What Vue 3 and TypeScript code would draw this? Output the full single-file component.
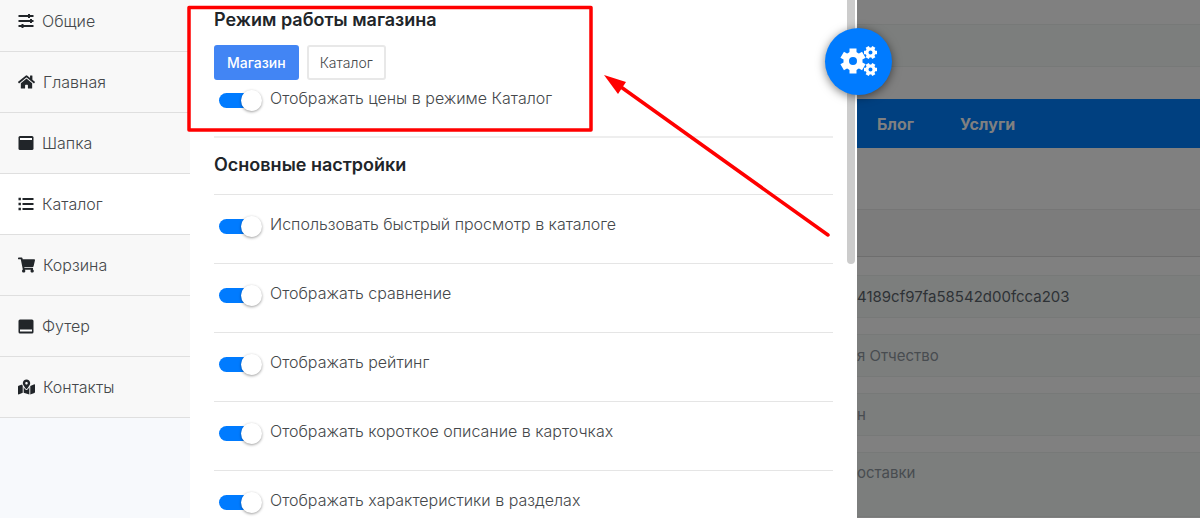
<script setup lang="ts">
import { ref } from 'vue'

interface MenuItem {
  label: string
  icon: 'sliders' | 'home' | 'header' | 'list' | 'cart' | 'footer' | 'map'
}

interface Option {
  id: string
  label: string
  on: boolean
}

const menu: MenuItem[] = [
  { label: 'Общие', icon: 'sliders' },
  { label: 'Главная', icon: 'home' },
  { label: 'Шапка', icon: 'header' },
  { label: 'Каталог', icon: 'list' },
  { label: 'Корзина', icon: 'cart' },
  { label: 'Футер', icon: 'footer' },
  { label: 'Контакты', icon: 'map' },
]
const active = ref('Каталог')
const mode = ref('Магазин')
const showPrices = ref(true)

const options = ref<Option[]>([
  { id: 'quick', label: 'Использовать быстрый просмотр в каталоге', on: true },
  { id: 'compare', label: 'Отображать сравнение', on: true },
  { id: 'rating', label: 'Отображать рейтинг', on: true },
  { id: 'short', label: 'Отображать короткое описание в карточках', on: true },
  { id: 'specs', label: 'Отображать характеристики в разделах', on: true },
])

const token = ref('4189cf97fa58542d00fcca203')
const person = ref('я Отчество')
const phone = ref('н')
const delivery = ref('оставки')
const search = ref('')
</script>

<template>
  <div class="screen">
    <aside class="drawer">
      <nav class="menu">
        <a
          v-for="item in menu"
          :key="item.label"
          href="#"
          class="menu-item"
          :class="{ active: active === item.label }"
          @click.prevent="active = item.label"
        >
          <svg v-if="item.icon === 'sliders'" class="icon" viewBox="0 0 16 16">
            <path d="M0.500 3h15M0.500 8h15M0.500 13h15" stroke="currentColor" stroke-width="1.800" />
            <path d="M11 1v4M13 6v4M4.500 11v4" stroke="currentColor" stroke-width="2" />
          </svg>
          <svg v-else-if="item.icon === 'home'" class="icon icon-wide" viewBox="0 0 576 512">
            <path fill="currentColor" d="M280.37 148.26L96 300.11V464a16 16 0 0 0 16 16l112.06-.29a16 16 0 0 0 15.92-16V368a16 16 0 0 1 16-16h64a16 16 0 0 1 16 16v95.64a16 16 0 0 0 16 16.05L464 480a16 16 0 0 0 16-16V300L295.67 148.26a12.19 12.19 0 0 0-15.3 0zM571.6 251.47L488 182.56V44.05a12 12 0 0 0-12-12h-56a12 12 0 0 0-12 12v72.61L318.47 43a48 48 0 0 0-61 0L4.34 251.47a12 12 0 0 0-1.6 16.9l25.5 31A12 12 0 0 0 45.15 301l235.22-193.74a12.19 12.19 0 0 1 15.3 0L530.9 301a12 12 0 0 0 16.9-1.6l25.5-31a12 12 0 0 0-1.7-16.93z" />
          </svg>
          <svg v-else-if="item.icon === 'header'" class="icon" viewBox="0 0 16 16">
            <rect x="0.500" y="1" width="15" height="14" rx="1.500" fill="currentColor" />
            <path d="M2 4h12" stroke="#fff" stroke-width="2" />
          </svg>
          <svg v-else-if="item.icon === 'list'" class="icon" viewBox="0 0 16 16">
            <path d="M0.500 3h2.400M0.500 8h2.400M0.500 13h2.400" stroke="currentColor" stroke-width="2.400" />
            <path d="M4.500 3h11M4.500 8h11M4.500 13h11" stroke="currentColor" stroke-width="1.800" />
          </svg>
          <svg v-else-if="item.icon === 'cart'" class="icon icon-wide" viewBox="0 0 576 512">
            <path fill="currentColor" d="M528.12 301.319l47.273-208C578.806 78.301 567.391 64 551.99 64H159.208l-9.166-44.81C147.758 8.021 137.93 0 126.529 0H24C10.745 0 0 10.745 0 24v16c0 13.255 10.745 24 24 24h69.883l70.248 343.435C147.325 417.1 136 435.222 136 456c0 30.928 25.072 56 56 56s56-25.072 56-56c0-15.674-6.447-29.835-16.824-40h209.647C430.447 426.165 424 440.326 424 456c0 30.928 25.072 56 56 56s56-25.072 56-56c0-22.172-12.888-41.332-31.579-50.405l5.517-24.276c3.413-15.018-8.002-29.319-23.403-29.319H218.117l-6.545-32h293.145c11.206 0 20.92-7.754 23.403-18.681z" />
          </svg>
          <svg v-else-if="item.icon === 'footer'" class="icon" viewBox="0 0 16 16">
            <rect x="0.500" y="1.500" width="15" height="14" rx="1.500" fill="currentColor" />
            <path d="M2 12.500h12" stroke="#fff" stroke-width="2" />
          </svg>
          <svg v-else class="icon icon-wide" viewBox="0 0 576 512">
            <path fill="currentColor" d="M288 0c-69.59 0-126 56.41-126 126 0 56.26 82.35 158.8 113.9 196.02 6.39 7.54 17.82 7.54 24.2 0C331.65 284.8 414 182.26 414 126 414 56.41 357.59 0 288 0zm0 168c-23.2 0-42-18.8-42-42s18.8-42 42-42 42 18.8 42 42-18.8 42-42 42zM20.12 215.95A32.006 32.006 0 0 0 0 245.66v250.32c0 11.32 11.43 19.06 21.94 14.86L160 448V214.92c-8.84-15.98-16.07-31.54-21.25-46.42L20.12 215.95zM288 359.67c-14.07 0-27.38-6.18-36.51-16.96-19.66-23.2-40.57-49.62-59.49-76.72v182l192 64V266c-18.92 27.09-39.82 53.52-59.49 76.72-9.13 10.77-22.44 16.95-36.51 16.95zm266.06-198.51L416 224v288l139.88-55.95A31.996 31.996 0 0 0 576 426.34V176.02c0-11.32-11.43-19.06-21.94-14.86z" />
          </svg>
          <span>{{ item.label }}</span>
        </a>
      </nav>

      <main class="settings">
        <section class="mode">
          <h2>Режим работы магазина</h2>
          <div class="buttons">
            <button
              v-for="name in ['Магазин', 'Каталог']"
              :key="name"
              type="button"
              :class="{ chosen: mode === name }"
              @click="mode = name"
            >{{ name }}</button>
          </div>
          <label class="option" for="prices">
            <input id="prices" v-model="showPrices" type="checkbox" class="switch" />
            <span>Отображать цены в режиме Каталог</span>
          </label>
        </section>
        <h2 class="group-title">Основные настройки</h2>
        <div v-for="option in options" :key="option.id" class="row">
          <label class="option" :for="option.id">
            <input :id="option.id" v-model="option.on" type="checkbox" class="switch" />
            <span>{{ option.label }}</span>
          </label>
        </div>
      </main>

      <div class="scroll-thumb"></div>

      <button type="button" class="toggle" aria-label="Настройки">
        <svg viewBox="0 0 40 32" class="cogs" fill="none" stroke="#fff" stroke-linejoin="round">
          <g stroke-width="7">
            <circle cx="14" cy="15" r="6.800" stroke-width="5.600" />
            <path d="M14 2.500v5M14 22.500v5M3.200 8.800l4.300 2.500M20.500 18.700l4.300 2.500M3.200 21.200l4.300-2.500M20.500 11.300l4.300-2.500" />
          </g>
          <g stroke-width="3.600">
            <circle cx="31.500" cy="6.500" r="3.500" stroke-width="3" />
            <path d="M25 6.500h3M35 6.500h3M28.200 0.900l1.500 2.600M33.300 9.500l1.500 2.600M34.800 0.900l-1.500 2.600M29.700 9.500l-1.500 2.600" />
            <circle cx="31.500" cy="23.500" r="3.500" stroke-width="3" />
            <path d="M25 23.500h3M35 23.500h3M28.200 17.900l1.500 2.600M33.300 26.500l1.500 2.600M34.800 17.900l-1.500 2.600M29.700 26.500l-1.500 2.600" />
          </g>
        </svg>
      </button>
    </aside>

    <div class="shop">
      <input v-model="search" class="field" aria-label="Поиск" />
      <nav class="shop-nav">
        <a href="#">Блог</a>
        <a href="#">Услуги</a>
      </nav>
      <div class="band"></div>
      <form class="form">
        <input v-model="token" class="field dark" aria-label="Ключ" />
        <input v-model="person" class="field" aria-label="Имя Отчество" />
        <input v-model="phone" class="field" aria-label="Телефон" />
        <textarea v-model="delivery" class="field area" aria-label="Адрес доставки"></textarea>
      </form>
    </div>

    <svg class="marks" width="840" height="250" viewBox="0 0 840 250">
      <rect x="189" y="7.500" width="402" height="122.500" fill="none" stroke="#f00" stroke-width="3.500" stroke-linejoin="round" />
      <path d="M828 235L621 87" stroke="#f00" stroke-width="3.500" stroke-linecap="round" />
      <path d="M604 75L626 82L618 94Z" fill="#f00" />
    </svg>
  </div>
</template>

<style>
body {
  margin: 0;
  overflow: hidden;
}
</style>

<style scoped>
.screen {
  position: relative;
  display: flex;
  height: 100vh;
  overflow: hidden;
  font-family: Inter, "Noto Sans", sans-serif;
  font-size: 16px;
  font-weight: 300;
  color: #45484b;
  background: #808080;
}
* {
  box-sizing: border-box;
}
.drawer {
  position: relative;
  display: flex;
  flex: 0 0 857px;
  background: #fff;
}
.menu {
  flex: 0 0 190px;
  background: #f7f9fc;
}
.menu-item {
  display: flex;
  align-items: center;
  gap: 8px;
  height: 61px;
  padding-left: 18px;
  border-bottom: 1px solid #dfdfdf;
  background: #f8f8f8;
  color: #45484b;
  text-decoration: none;
}
.menu-item:first-child {
  height: 52px;
  padding-bottom: 10px;
}
.menu-item.active {
  background: #fff;
}
.icon {
  width: 16px;
  height: 16px;
  color: #212529;
}
.icon-wide {
  width: 17px;
}
.settings {
  flex: 1;
  padding: 0 24px;
}
h2 {
  margin: 0;
  font-size: 18px;
  line-height: 24px;
  font-weight: 600;
  color: #212529;
}
.mode {
  height: 138px;
  padding-top: 8px;
  border-bottom: 2px solid #eee;
}
.buttons {
  display: flex;
  gap: 8px;
  padding: 13px 0 8px;
}
.buttons button {
  height: 35px;
  padding: 0 11px;
  border: 2px solid #e8e8e8;
  border-radius: 3px;
  background: #fff;
  font: inherit;
  font-size: 14px;
  color: #45484b;
}
.buttons button.chosen {
  border-color: #4285f4;
  background: #4285f4;
  font-weight: 500;
  color: #fff;
}
.option {
  display: flex;
  align-items: center;
  gap: 10px;
  height: 24px;
  padding-left: 5px;
}
.option span {
  padding-bottom: 4px;
}
.switch {
  position: relative;
  appearance: none;
  flex: none;
  width: 41px;
  height: 15px;
  margin: 0;
  border-radius: 8px;
  background: #bbb;
}
.switch::after {
  content: "";
  position: absolute;
  top: -3px;
  left: 0;
  width: 21px;
  height: 21px;
  border-radius: 50%;
  background: #fff;
  box-shadow: 0 1px 3px rgba(0, 0, 0, 0.4);
}
.switch:checked {
  background: #007bff;
}
.switch:checked::after {
  left: 22px;
}
.group-title {
  height: 57px;
  padding-top: 15px;
  border-bottom: 1px solid #e5e5e5;
}
.row {
  display: flex;
  align-items: center;
  height: 69px;
  padding-bottom: 6px;
  border-bottom: 1px solid #e5e5e5;
}
.scroll-thumb {
  position: absolute;
  top: -10px;
  right: 2px;
  width: 8px;
  height: 274px;
  border-radius: 4px;
  background: #ccc;
}
.toggle {
  position: absolute;
  top: 28px;
  right: -35px;
  z-index: 2;
  display: flex;
  align-items: center;
  justify-content: center;
  width: 67px;
  height: 67px;
  padding: 0;
  border: 0;
  border-radius: 50%;
  background: #007bff;
  box-shadow: 0 2px 10px rgba(0, 0, 0, 0.5);
}
.cogs {
  width: 40px;
  height: 32px;
}
.shop {
  flex: 1;
  min-width: 0;
  padding-top: 24px;
}
.field {
  display: block;
  width: 100%;
  height: 43px;
  padding: 0;
  border: 1px solid #777978;
  border-width: 1px 0;
  border-radius: 0;
  outline: 0;
  background: #7c7e7d;
  font: inherit;
  font-size: 15px;
  font-weight: 400;
  color: #484c50;
  resize: none;
}
.field.dark {
  color: #2e3236;
}
.shop-nav {
  display: flex;
  align-items: center;
  gap: 46px;
  height: 49px;
  margin-top: 32px;
  padding-left: 20px;
  background: #004080;
}
.shop-nav a {
  font-size: 16px;
  font-weight: 700;
  color: #808080;
  text-decoration: none;
}
.band {
  height: 48px;
  margin-top: 61px;
  border-top: 1px solid #767676;
  border-bottom: 1px solid #6e6e6e;
  background: #7c7c7c;
}
.form {
  display: flex;
  flex-direction: column;
  gap: 16px;
  padding-top: 18px;
}
.field.area {
  height: 65px;
  padding-top: 10px;
}
.marks {
  position: absolute;
  top: 0;
  left: 0;
  z-index: 3;
  pointer-events: none;
}
</style>
